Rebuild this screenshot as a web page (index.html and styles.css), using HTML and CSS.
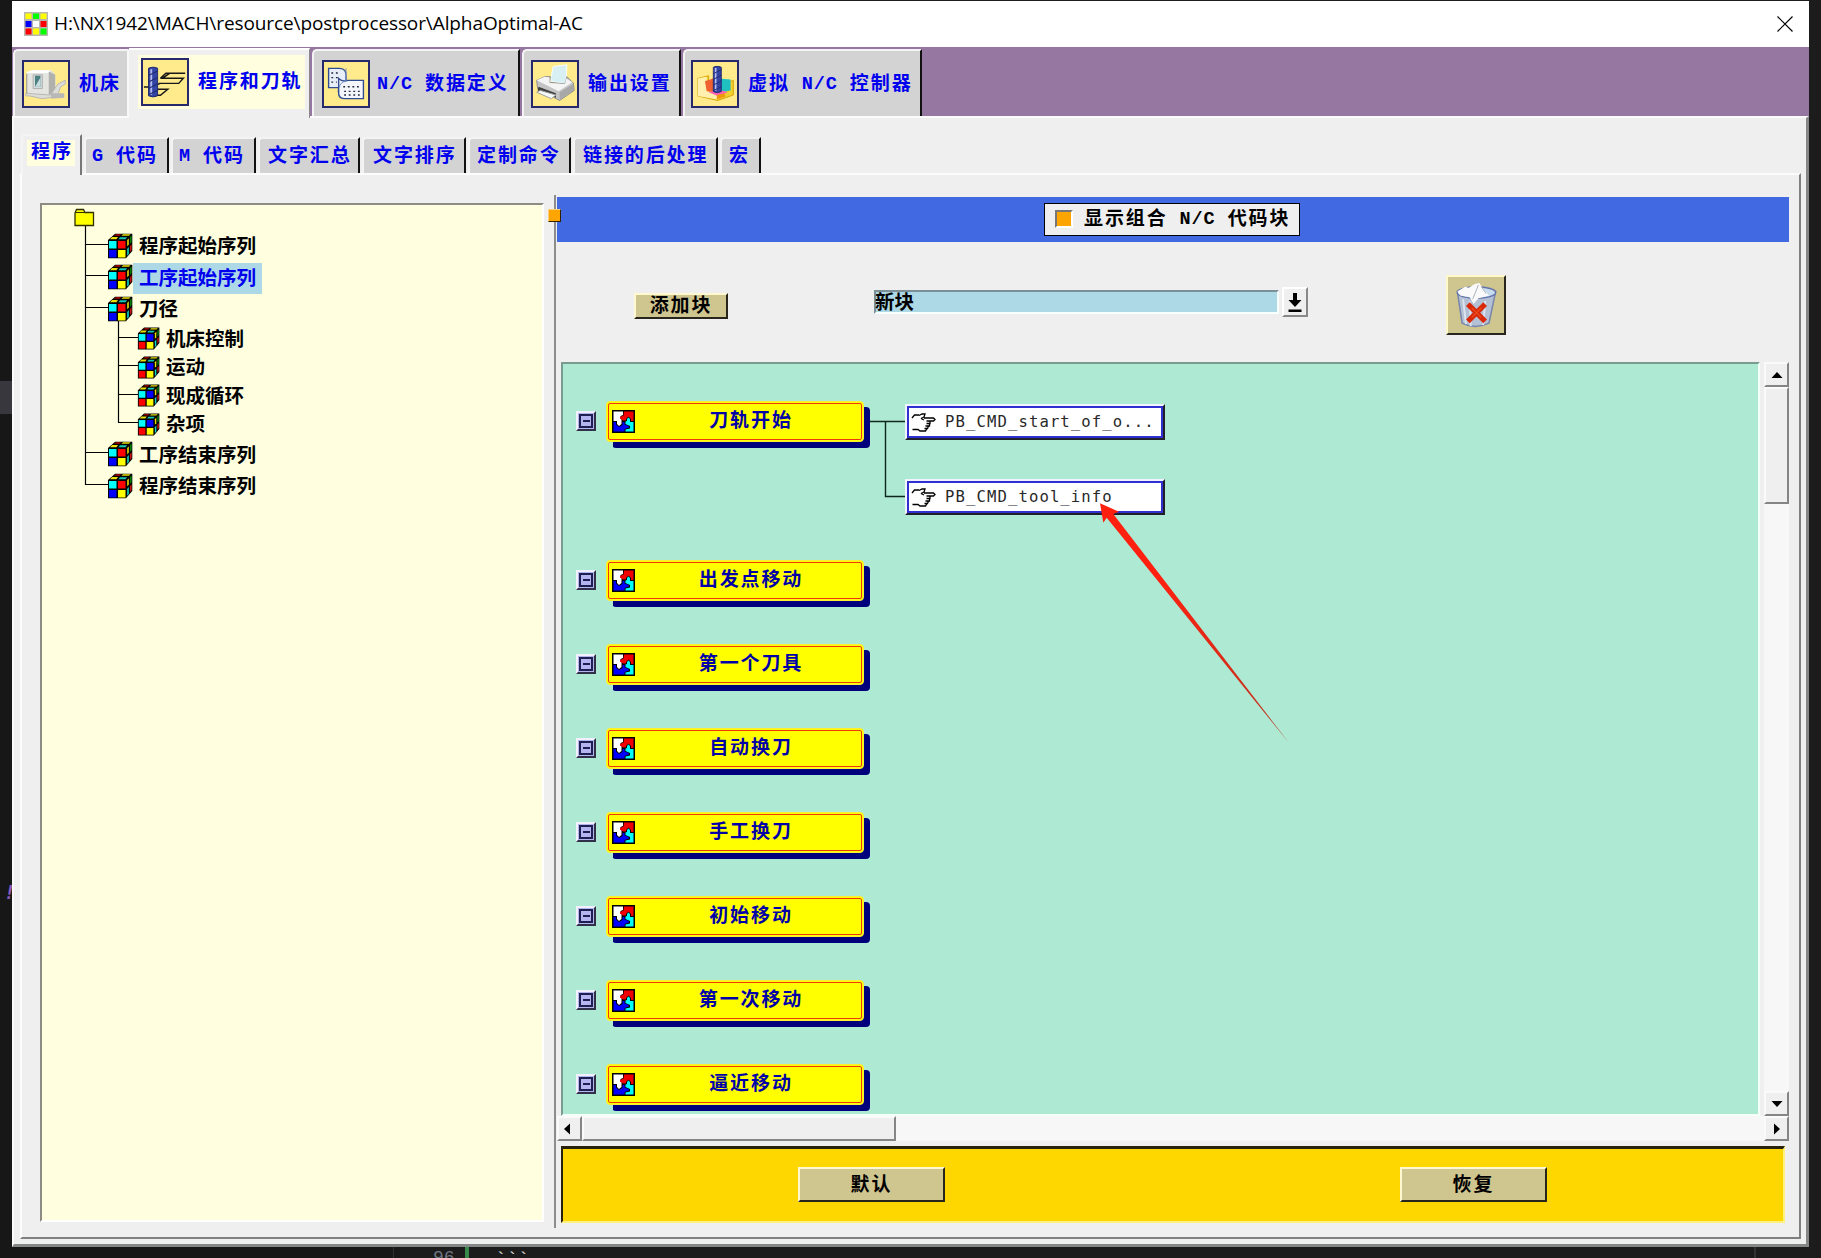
FILE: index.html
```html
<!DOCTYPE html>
<html lang="zh-CN">
<head>
<meta charset="utf-8">
<title>H:\NX1942\MACH\resource\postprocessor\AlphaOptimal-AC</title>
<link rel="stylesheet" href="styles.css">
</head>
<body>
<svg class="defs" width="0" height="0">
  <defs>
    <symbol id="cube-side" viewBox="0 0 26 26">
      <path d="M1 7L8 0.7H25.3V18L19 25.3H1Z" fill="#000"/>
      <path d="M7 2.5L9 1.3H14L12.5 2.7Z" fill="#c00000"/><path d="M16 1.3H23.5L22 2.7H14.5Z" fill="#e8e000"/>
      <path d="M3 6.3L5 4H11L9.5 6.3Z" fill="#e8e000"/><path d="M13 4.2H20L18.6 6.3H11.5Z" fill="#10c8b8"/>
      <path d="M20.2 7L21.8 5.2V11.5L20.2 13.3Z" fill="#e8e000"/><path d="M23 4L24.6 2.5V9L23 11Z" fill="#008000"/>
      <path d="M20.2 16L21.8 14V21L20.2 22.8Z" fill="#10d8c8"/><path d="M23 13L24.6 11.5V17L23 19Z" fill="#c81010"/>
    </symbol>
    <symbol id="cube-a" viewBox="0 0 26 26">
      <use href="#cube-side"/>
      <path d="M2 8H9.500V15.500H2Z" fill="#00ffff"/><path d="M11 8H18.500V15.500H11Z" fill="#ff0000"/>
      <path d="M2 17H9.500V24.500H2Z" fill="#0000ff"/><path d="M11 17H18.500V24.500H11Z" fill="#ffff00"/>
    </symbol>
    <symbol id="cube-b" viewBox="0 0 26 26">
      <use href="#cube-side"/>
      <path d="M2 8H9.500V15.500H2Z" fill="#00ffff"/><path d="M11 8H18.500V15.500H11Z" fill="#0000ff"/>
      <path d="M2 17H9.500V24.500H2Z" fill="#ff0000"/><path d="M11 17H18.500V24.500H11Z" fill="#ffff00"/>
    </symbol>
    <symbol id="puzzle" viewBox="0 0 23 23">
      <path d="M0 0H23V23H0Z" fill="#000"/>
      <path d="M1.500 1.500H11V5L8.500 6V9H9.500V14L7 16L5 14V11H1.500Z" fill="#fff"/>
      <path d="M12 1.500H21.500V11H19V9L16.500 6.500L14 9V10.500H11L8 8.500V7L11.500 5.500Z" fill="#f00000"/>
      <path d="M1.500 12H4V14.500L7 17L10.500 15V12H12.500V14.500L16.500 16L17 17.500L12.500 19V21.500H1.500Z" fill="#0000ff"/>
      <path d="M15 11V9L16.500 7.500L18 9V12H21.500V21.500H13.500V19.500L18 18.500V16L13.500 14V11.500Z" fill="#00ffff"/>
    </symbol>
    <symbol id="hand" viewBox="0 0 25 19">
      <path d="M1 5L3.500 2H8M8 2.500L11 1H14L13 4L10 5.500M13 5H22.500L24 6.500L22.500 8H15.500M15.500 8H19V10.500H15.500M18.500 10.500V13H14.500M17.500 13L16.500 15.500H13.500M16 15.500L14.500 18H9L7 16.500H1.500M10 5.500L13 7" fill="none" stroke="#000" stroke-width="1.300"/>
    </symbol>
    <symbol id="drill" viewBox="0 0 12 34">
      <path d="M1 2Q6 -1 11 2V32Q6 35 1 32Z" fill="#3344a4" stroke="#1c2468"/>
      <path d="M4 3V31" stroke="#b4bcf0" stroke-width="2"/>
      <path d="M1 10L11 5M1 17L11 12M1 24L11 19M1 31L11 26" stroke="#202c70" stroke-width="1.200"/>
    </symbol>
  </defs>
</svg>

<div class="backdrop">
  <span class="edge-mark"></span>
  <span class="edge-bang">!</span>
  <span class="edge-rule"></span>
  <span class="edge-num">96</span>
  <span class="edge-green"></span>
  <span class="edge-ticks">```</span>
  <span class="edge-rule far"></span>
</div>

<div class="window">
  <header class="titlebar">
    <svg class="app-icon" width="24" height="24" viewBox="0 0 24 24">
      <path d="M0 0H24V24H0Z" fill="#b8b8b0"/>
      <path d="M1.500 1.500H7.500V7H1.500ZM16.500 1.500H22.500V7H16.500ZM9 16.500H15V22.500H9Z" fill="#ffff00"/>
      <path d="M9 1.500H15V7H9ZM16.500 16.500H22.500V22.500H16.500Z" fill="#00ff00"/>
      <path d="M1.500 9H7.500V15H1.500Z" fill="#0000ff"/><path d="M9 9H15V15H9Z" fill="#fff"/>
      <path d="M16.500 9H22.500V15H16.500ZM1.500 16.500H7.500V22.500H1.500Z" fill="#ff0000"/>
    </svg>
    <span class="title">H:\NX1942\MACH\resource\postprocessor\AlphaOptimal-AC</span>
    <svg class="close" width="16" height="16" viewBox="0 0 16 16"><path d="M.5 .5L15.500 15.500M15.500 .5L.5 15.500" stroke="#000" stroke-width="1.200"/></svg>
  </header>

  <nav class="main-tabs">
    <div class="tab t-machine">
      <svg class="pic" viewBox="0 0 48 48">
        <path d="M3 12L8 9H30L34 14L35 34L31 37H3Z" fill="#e4e4e0"/><path d="M27 10L34 14V33L27 36Z" fill="#b0b0ac"/>
        <path d="M3 11L9 9H29L26 12H3Z" fill="#fff"/><path d="M10 14H20V29H10Z" fill="#d4dcdc" stroke="#aaa"/><path d="M12 15H18V27H12Z" fill="#4c8080"/><path d="M12 27L18 17V27Z" fill="#c4dce0"/>
        <path d="M2 34L14 35L29 36L37 24L45 20V24L40 27L36 38L20 40L6 37H2Z" fill="#dcdcd8" stroke="#b4b4b0"/><path d="M29 34L44 34V39L30 40Z" fill="#b8b8b8"/><path d="M3 13V34" stroke="#888"/>
      </svg>
      <span>机床</span>
    </div>
    <div class="tab active">
      <div class="face">
        <svg class="pic" viewBox="0 0 48 48">
          <path d="M19 20L25 14.500H46M46 14.500H29L21 20H44L39 25.500H17M19 25.500L8 29.500H1M14 32H27L19 38.500H12" fill="none" stroke="#181818" stroke-width="1.600"/>
          <use href="#drill" x="5" y="7" width="12" height="34"/>
        </svg>
        <span>程序和刀轨</span>
      </div>
    </div>
    <div class="tab t-data">
      <svg class="pic" viewBox="0 0 48 48">
        <path d="M5 7H17Q25 7 24 17V35Q25 41 18 38Q15 35 16 28H5Z" fill="#e8eef8" stroke="#304c90" stroke-width="1.500"/>
        <path d="M16 28V18Q20 22 26 20H43V40H23Q16 40 16 34Z" fill="#f4f6fc" stroke="#304c90" stroke-width="1.500"/>
        <path d="M17 28Q17 22 24 21V7" fill="none" stroke="#708cc4"/>
        <path d="M8 12H17M8 17H15M8 22H14M21 27H41M22 32H41M22 36H40" stroke="#202840" stroke-width="1.500" stroke-dasharray="2 3"/>
      </svg>
      <span><i>N/C</i><b></b>数据定义</span>
    </div>
    <div class="tab t-output">
      <svg class="pic" viewBox="0 0 48 48">
        <path d="M19 21L22 5L37 3L36 24Z" fill="#d8f0f4" stroke="#f8ffff"/>
        <path d="M4 20L13 16H19L18 22L35 24L37 16L44 23L45 31L29 42L5 29Z" fill="#c4c4c4" stroke="#888"/>
        <path d="M4 20L13 16L18 17L18 23L35 24L36 18L43 22L28 32Z" fill="#f4f4f4"/>
        <path d="M6 27L25 34V39L5 31Z" fill="#404040"/><path d="M8 31L25 36L20 40L4 33Z" fill="#f4fafa" stroke="#999"/><path d="M29 33L44 24V31L29 41Z" fill="#a8a8a8"/>
      </svg>
      <span>输出设置</span>
    </div>
    <div class="tab t-vnc">
      <svg class="pic" viewBox="0 0 48 48">
        <path d="M5 18L17 15V24L29 26L44 20V36L27 42L5 37Z" fill="#f0d030" stroke="#d8a000"/>
        <path d="M5 18L15 16V31L27 37V41L5 37Z" fill="#fff0b0"/><path d="M13 21L25 17V33L15 32Z" fill="#f06030"/><path d="M27 18L41 19V31L31 33Z" fill="#20c0c0"/><path d="M17 33L28 30L38 33L27 37Z" fill="#ff60b0"/>
        <path d="M26 36L35 34V38L26 41Z" fill="#f09810"/><use href="#drill" x="21" y="4" width="11" height="30"/>
      </svg>
      <span>虚拟<b></b><i>N/C</i><b></b>控制器</span>
    </div>
  </nav>

  <main class="book">
    <nav class="sub-tabs">
      <div class="sub active"><span>程序</span></div>
      <div class="sub w85"><i>G</i><b></b>代码</div>
      <div class="sub w85"><i>M</i><b></b>代码</div>
      <div class="sub w102">文字汇总</div>
      <div class="sub w104">文字排序</div>
      <div class="sub w103">定制命令</div>
      <div class="sub w145">链接的后处理</div>
      <div class="sub w41">宏</div>
    </nav>

    <div class="page">
      <aside class="tree">
        <svg class="tree-lines" width="100" height="290" viewBox="0 0 100 290">
          <path d="M43.500 20V279.500H66M43.500 39.500H66M43.500 70.500H66M43.500 102.500H66M76.500 110V217.500H96M76.500 132.500H96M76.500 160.500H96M76.500 189.500H96M43.500 247.500H66" fill="none" stroke="#000" stroke-width="1.200"/>
          <path d="M33 8L34.500 4.500H41.500L43 7.500H51.500V20.500H33Z" fill="#ffff00" stroke="#303000" stroke-width="1.300"/><path d="M33 7.500H45" stroke="#303000"/>
        </svg>
        <ul>
          <li><svg class="cube"><use href="#cube-a"/></svg><span>程序起始序列</span></li>
          <li class="selected"><svg class="cube"><use href="#cube-a"/></svg><span>工序起始序列</span></li>
          <li><svg class="cube"><use href="#cube-a"/></svg><span>刀径</span></li>
          <li class="child"><svg class="cube"><use href="#cube-b"/></svg><span>机床控制</span></li>
          <li class="child"><svg class="cube"><use href="#cube-b"/></svg><span>运动</span></li>
          <li class="child"><svg class="cube"><use href="#cube-b"/></svg><span>现成循环</span></li>
          <li class="child"><svg class="cube"><use href="#cube-b"/></svg><span>杂项</span></li>
          <li><svg class="cube"><use href="#cube-a"/></svg><span>工序结束序列</span></li>
          <li><svg class="cube"><use href="#cube-a"/></svg><span>程序结束序列</span></li>
        </ul>
      </aside>

      <div class="sash"><span class="sash-handle"></span></div>

      <section class="editor">
        <div class="banner">
          <div class="toggle"><span class="indicator"></span><span>显示组合<b></b><i>N/C</i><b></b>代码块</span></div>
        </div>
        <div class="toolbar">
          <button class="btn add">添加块</button>
          <div class="entry">新块</div>
          <button class="drop"><svg width="16" height="21" viewBox="0 0 16 21"><path d="M6 1H10V8H14.500L8 15L1.500 8H6ZM1.500 17.500H14.500V20H1.500Z"/></svg></button>
          <button class="trash">
            <svg width="43" height="46" viewBox="0 0 44 48">
              <path d="M2 10L7 43Q20 50 35 43L42 10Z" fill="#b4c0d4" stroke="#7484ac" stroke-width="1.500"/>
              <path d="M8 18L11 44M15 20L16 46M31 20L29 45" stroke="#dce4f0" stroke-width="2"/>
              <ellipse cx="22" cy="11" rx="20" ry="6" fill="#c8dcf0" stroke="#6474a8" stroke-width="1.500"/>
              <path d="M2 10L10 5L14 6L20 2L25 1L28 6L35 14L24 17L19 23L15 16L5 14Z" fill="#fafafa"/><path d="M24 3L18 18M27 5L32 12" stroke="#a8b0b8"/>
              <path d="M13 23L31 41M31 23L13 41" stroke="#d82808" stroke-width="5.500"/><path d="M17 27L27 37M27 27L17 37" stroke="#e84818" stroke-width="1.500"/>
            </svg>
          </button>
        </div>

        <div class="canvas-row">
          <div class="canvas">
            <div class="event first">
              <span class="fold"></span>
              <div class="block"><svg class="pz"><use href="#puzzle"/></svg><span>刀轨开始</span></div>
              <svg class="wire" width="35" height="78" viewBox="0 0 35 78"><path d="M0 1.500H35M15.500 1.500V76.500H35" fill="none" stroke="#10281c" stroke-width="1.400"/></svg>
              <div class="commands">
                <div class="cmd"><svg class="hand"><use href="#hand"/></svg>PB_CMD_start_of_o...</div>
                <div class="cmd"><svg class="hand"><use href="#hand"/></svg>PB_CMD_tool_info</div>
              </div>
            </div>
            <div class="event"><span class="fold"></span><div class="block"><svg class="pz"><use href="#puzzle"/></svg><span>出发点移动</span></div></div>
            <div class="event"><span class="fold"></span><div class="block"><svg class="pz"><use href="#puzzle"/></svg><span>第一个刀具</span></div></div>
            <div class="event"><span class="fold"></span><div class="block"><svg class="pz"><use href="#puzzle"/></svg><span>自动换刀</span></div></div>
            <div class="event"><span class="fold"></span><div class="block"><svg class="pz"><use href="#puzzle"/></svg><span>手工换刀</span></div></div>
            <div class="event"><span class="fold"></span><div class="block"><svg class="pz"><use href="#puzzle"/></svg><span>初始移动</span></div></div>
            <div class="event"><span class="fold"></span><div class="block"><svg class="pz"><use href="#puzzle"/></svg><span>第一次移动</span></div></div>
            <div class="event last"><span class="fold"></span><div class="block"><svg class="pz"><use href="#puzzle"/></svg><span>逼近移动</span></div></div>
            <svg class="pointer" width="192" height="243" viewBox="0 0 192 243">
              <defs><linearGradient id="fade" x1="0" y1="0" x2="1" y2="1"><stop offset=".3" stop-color="#ff2010"/><stop offset="1" stop-color="#b83820"/></linearGradient></defs>
              <path d="M0 .3L19 8.700L13.300 11L189.300 240.300L6.700 14.700L3.300 19.700Z" fill="url(#fade)"/>
            </svg>
          </div>
          <div class="vscroll">
            <span class="sb"><svg width="12" height="8" viewBox="0 0 12 8"><path d="M.5 7L6 1L11.500 7Z"/></svg></span>
            <span class="sb vthumb"></span>
            <span class="sb end"><svg width="12" height="8" viewBox="0 0 12 8"><path d="M.5 1L6 7L11.500 1Z"/></svg></span>
          </div>
        </div>
        <div class="hscroll">
          <span class="sb left"><svg width="8" height="12" viewBox="0 0 8 12"><path d="M7 .5L1 6L7 11.500Z"/></svg></span>
          <span class="sb hthumb"></span>
          <span class="sb hend"><svg width="8" height="12" viewBox="0 0 8 12"><path d="M1 .5L7 6L1 11.500Z"/></svg></span>
        </div>

        <footer class="actions">
          <button class="btn wide">默认</button>
          <button class="btn wide">恢复</button>
        </footer>
      </section>
    </div>
  </main>
</div>
</body>
</html>
```
FILE: styles.css
```css
* { box-sizing: border-box; }
html, body { margin: 0; height: 1258px; overflow: hidden; }
body {
  background: linear-gradient(90deg, #171717 0 400px, #1c1c1c 400px);
  font: 700 19px/24px "Liberation Mono", "Noto Sans CJK SC", monospace;
  letter-spacing: 1.9px;
  color: #000;
}
.defs { position: absolute; }
button { font: inherit; letter-spacing: inherit; color: inherit; padding: 0; margin: 0; }
svg { display: block; flex: none; }
i { font: 700 18.500px/24px "Liberation Mono", monospace; letter-spacing: 0.9px; }
b { display: inline-block; width: 12px; }

/* desktop behind the window */
.backdrop span { position: absolute; }
.backdrop .edge-mark { left: 0; top: 381px; width: 12px; height: 33px; background: #37373d; }
.backdrop .edge-bang { left: 4px; top: 881px; font: italic 700 19px/22px "DejaVu Sans Mono", monospace; color: #8a5cc0; }
.backdrop .edge-rule { left: 393px; top: 1247px; width: 1px; height: 11px; background: #303030; }
.backdrop .far { left: 1754px; width: 2px; background: #333; }
.backdrop .edge-num { left: 433px; top: 1246px; font: 400 18px/24px "Liberation Mono", monospace; letter-spacing: 0; color: #6e7681; }
.backdrop .edge-green { left: 465px; top: 1247px; width: 4px; height: 11px; background: #388a4c; }
.backdrop .edge-ticks { left: 495px; top: 1248px; font: 400 19px/24px "Liberation Mono", monospace; letter-spacing: 0; color: #d4d4d4; }

.window { position: relative; width: 1797px; height: 1246px; margin: 1px 0 0 12px; background: #efefef; }
.titlebar { display: flex; align-items: center; height: 46px; padding: 0 12px; background: #fff; }
.app-icon { margin-bottom: 1px; }
.title { margin: 0 0 2px 6px; font: 400 19px/26px "Open Sans", sans-serif; letter-spacing: -0.1px; white-space: nowrap; }
.close { margin: 0 4px 1px auto; }

.main-tabs { display: flex; align-items: flex-end; height: 69px; padding-left: 1px; background: #9577a2; color: #0000ee; }
.tab {
  display: flex; align-items: center; gap: 9px; height: 67px; padding: 1px 0 0 8px; margin-right: 2px;
  background: #d3d3d3; border: solid; border-width: 2px 2px 0 2px; border-color: #f4f4f4 #111 #111 #f4f4f4;
  border-top-left-radius: 5px; white-space: nowrap;
}
.tab > span, .face > span { display: flex; padding-top: 2px; }
.pic { width: 48px; height: 48px; background: #ffeb8c; border: 2px solid #28286c; }
.t-machine { width: 116px; margin-right: 0; border-right-color: #f8f8f8; padding-left: 7px; }
.tab.active {
  position: relative; width: 181px; height: 70px; margin: 0 2px -2px 0; padding: 0 0 5px 9px;
  background: #efefef; border-width: 2px 1px 0 0; border-color: #fff #888; border-radius: 0;
}
.face { display: flex; align-items: center; gap: 9px; width: 167px; height: 54px; padding: 0 0 0 3px; background: #ffffe0; }
.t-data { width: 208px; }
.t-data > span { margin-left: -2px; }
.t-output { width: 159px; padding-left: 7px; }
.t-vnc { width: 239px; padding-left: 6px; }

.book { height: 1131px; border: solid; border-width: 2px 3px 3px 2px; border-color: #fbfbfb #858787 #858787 #fafafa; }
.sub-tabs { display: flex; align-items: flex-end; gap: 2px; height: 55px; padding-left: 7px; color: #0000ee; }
.sub {
  height: 36px; padding: 6px 0 0 6px; background: #d3d3d3; white-space: nowrap; display: flex;
  border: solid; border-width: 2px 2px 0 2px; border-color: #f4f4f4 #111 #111 #f4f4f4; border-top-left-radius: 4px;
}
.sub.active { position: relative; width: 61px; height: 41px; margin-bottom: -2px; padding: 4px 0 0 4px; background: #efefef; border-right-color: #777; }
.sub.active span { width: 48px; height: 26px; padding-left: 4px; line-height: 27px; background: #ffffe0; }
.w85 { width: 85px; } .w102 { width: 102px; padding-left: 8px; } .w104 { width: 104px; padding-left: 9px; }
.w103 { width: 103px; padding-left: 7px; } .w145 { width: 145px; padding-left: 8px; } .w41 { width: 41px; padding-left: 7px; }

.page { display: flex; align-items: flex-start; height: 1066px; margin: 0 5px 0 6px; border: solid; border-width: 2px; border-color: #fcfcfc #808080 #808080 #fcfcfc; }

.tree { position: relative; flex: none; width: 504px; height: 1019px; margin: 28px 0 0 18px; background: #ffffe0; border: solid; border-width: 2px; border-color: #8c8c84 #fff #fff #8c8c84; }
.tree-lines { position: absolute; left: 0; top: 0; }
.tree ul { position: relative; list-style: none; margin: 0; padding: 26px 0 0 65px; font-size: 19.5px; letter-spacing: 0; }
.tree li { display: flex; align-items: center; height: 31.5px; }
.tree .cube { width: 26px; height: 26px; margin-bottom: 2px; }
.tree li span { height: 31px; padding: 0 6px 0 6px; line-height: 34px; }
.tree .selected span { background: #add8e6; color: #0000ee; }
.tree .child { height: 28.5px; padding-left: 30px; }
.tree .child .cube { width: 23px; height: 23px; }
.tree .child span { height: 28px; line-height: 31px; }

.sash { position: relative; z-index: 1; flex: none; width: 2px; height: 1033px; margin: 20px 1px 0 10px; background: #8c8c8c; }
.sash-handle { position: absolute; left: -6px; top: 14px; width: 13px; height: 13px; background: #ffa500; border: solid; border-width: 1px; border-color: #ffd080 #332000 #332000 #ffd080; }

.editor { flex: none; width: 1232px; margin-top: 22px; }
.banner { height: 45px; padding: 6px 0 0 487px; background: #4169e1; }
.toggle { display: flex; align-items: center; gap: 11px; width: 256px; height: 33px; padding-left: 10px; background: #efefef; border: 1.5px solid #000; }
.toggle span:last-child { display: flex; padding-top: 1px; }
.indicator { width: 18px; height: 18px; margin-bottom: 1px; background: #ffa500; border: 2px solid; border-color: #777 #fff #fff #777; }
.toolbar { display: flex; align-items: flex-start; height: 120px; padding-left: 77px; }
.btn { padding-top: 2px; background: #cfc58f; border: solid; border-width: 2px; border-color: #fff8d0 #28261c #28261c #fff8d0; display: flex; justify-content: center; align-items: center; }
.add { width: 94px; height: 26px; margin-top: 51px; }
.entry { width: 405px; height: 24px; margin: 48px 0 0 146px; padding-left: 0; background: #add8e6; border: solid; border-width: 2px; border-color: #7c9098 #f8ffff #f8ffff #7c9098; font-size: 19.5px; line-height: 24px; letter-spacing: 0; text-indent: -1px; }
.drop { display: flex; justify-content: center; align-items: center; width: 26px; height: 30px; margin: 45px 0 0 3px; background: #efefef; border: 2px solid; border-color: #fff #888 #888 #fff; }
.trash { display: flex; justify-content: center; align-items: center; width: 60px; height: 60px; margin: 33px 0 0 138px; background: #cfc58f; border: 2px solid; border-color: #fff8c8 #28261c #28261c #fff8c8; }

.canvas-row { display: flex; height: 754px; padding-left: 4px; gap: 4px; }
.canvas { position: relative; width: 1199px; height: 754px; padding: 37px 0 0 13px; background: #ade9d3; border: solid; border-width: 2px; border-color: #789c90 #f4fffa #f4fffa #789c90; overflow: hidden; }
.event { display: flex; align-items: flex-start; height: 84px; }
.event.first { height: 159px; }
.event.last { height: 60px; }
.fold { position: relative; width: 20px; height: 20px; margin: 10px 10px 0 0; background: #b4b4f0; border: 2px solid; border-color: #f0f0ff #303048 #303048 #f0f0ff; flex: none; box-shadow: inset 0 0 0 1px #b4b4f0, inset 0 0 0 3px #202050; }
.fold::after { content: ""; position: absolute; left: 5px; top: 7px; width: 7px; height: 2px; background: #202050; }
/* the drop shadow is a hard offset copy of the block */
.block { display: flex; align-items: center; flex: none; width: 258px; height: 41px; padding: 0 0 1px 4px; background: #ffff00; border: 1px solid #ffee30; outline: 1.500px solid #f03810; outline-offset: -3px; border-radius: 4px; box-shadow: 6px 6px 0 #00007c; color: #0000a8; clip-path: polygon(0 0, 258px 0, 258px 6px, 264px 6px, 264px 47px, 7px 47px, 7px 41px, 0 41px); }
.pz { width: 23px; height: 23px; margin-left: 1px; }
.block span { flex: 1; text-align: center; padding: 1px 0 0 4px; }
.wire { margin: 19px 0 0 6px; }
.commands { display: flex; flex-direction: column; gap: 39px; margin-top: 3px; }
.cmd {
  display: flex; align-items: center; gap: 9px; width: 260px; height: 36px; padding-left: 4px; background: #fff;
  border: solid; border-width: 2px; border-color: #f0f4ff #202028 #202028 #f0f4ff; outline: 2px solid #3030d0; outline-offset: -4px;
  font: 400 15.600px/24px "DejaVu Sans Mono", monospace; letter-spacing: 1.100px; color: #282828; white-space: nowrap;
}
.hand { width: 25px; height: 19px; }
.pointer { position: absolute; left: 537px; top: 139px; }

.vscroll, .hscroll { background: #f7f7f7; display: flex; }
.vscroll { flex-direction: column; width: 25px; }
.sb { display: flex; justify-content: center; align-items: center; width: 25px; height: 25px; flex: none; background: #efefef; border: 2px solid; border-color: #fafafa #858585 #858585 #fafafa; }
.vthumb { height: 117px; }
.end { margin-top: auto; }
.hscroll { height: 25px; }
.left { justify-content: flex-start; padding-left: 4px; }
.hthumb { width: 314px; }
.hend { margin-left: auto; }

.actions { display: flex; gap: 455px; height: 77px; margin: 5px 4px 0 4px; padding: 18px 0 0 235px; background: #ffd700; border: solid; border-width: 3px 2px 2px 2px; border-color: #28220c #fff27c #fff27c #28220c; }
.wide { width: 147px; height: 35px; }
```
